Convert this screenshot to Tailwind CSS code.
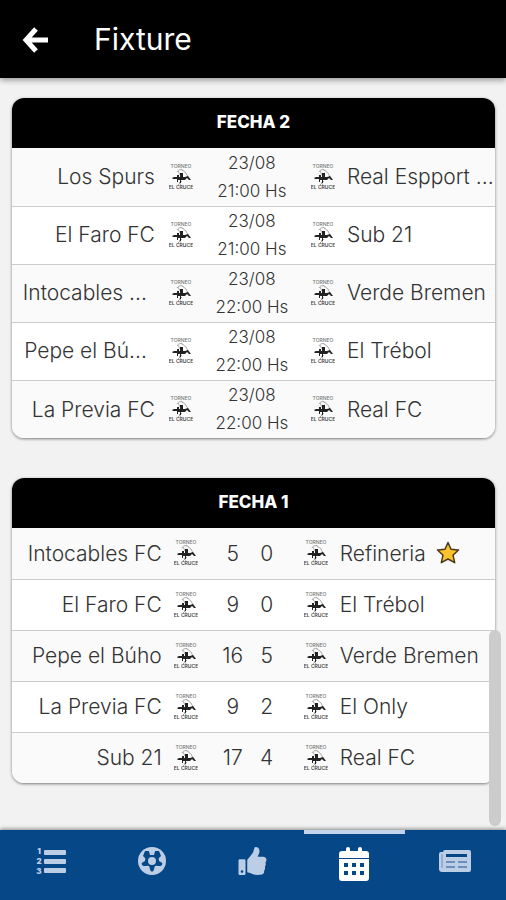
<!DOCTYPE html>
<html lang="es">

<head>
    <meta charset="UTF-8">
    <meta name="viewport" content="width=device-width, initial-scale=1.0">
    <title>Fixture</title>
    <script src="https://cdn.jsdelivr.net/npm/@tailwindcss/browser@4"></script>
</head>

<body class="bg-[#f2f2f2] h-screen flex flex-col overflow-hidden font-[Inter,sans-serif] font-light text-[#333]">
    <!-- Tournament crest, reused in every row -->
    <svg class="hidden">
        <symbol id="crest" viewBox="0 0 24 28">
            <text x="12" y="5" text-anchor="middle" font-size="5" font-weight="500" fill="#777">TORNEO</text>
            <path d="M8 9c1-3 6-3 6-1M9 8l2 4M12 6l5 4 2 4M10 19l2 3M13 18l-4 4" fill="none" stroke="#aaa" stroke-width="1" />
            <path d="M3 15l2-1h3v-2h2v2h1v-4h3v4h2l3-1 3 4-2 0-2-2-2 2h-4v3h-1v-3h-2v2H8v-3H4z" fill="#222" />
            <text x="12" y="26" text-anchor="middle" font-size="5" font-weight="600" fill="#444">EL CRUCE</text>
        </symbol>
    </svg>

    <header class="relative z-10 shrink-0 h-[78px] bg-black text-white flex items-center gap-11 pl-[22px] shadow-[0_2px_6px_rgba(0,0,0,0.4)]">
        <button type="button" aria-label="Volver">
            <svg class="w-7 h-7" viewBox="0 0 28 28" fill="none" stroke="currentColor" stroke-width="5">
                <path d="M14 4L4 15l10 11M4 15h22" />
            </svg>
        </button>
        <h1 class="text-[30px] font-normal">Fixture</h1>
    </header>

    <main class="relative flex-1 min-h-0 overflow-hidden pt-5 pl-3 pr-[11px] flex flex-col gap-10">
        <section class="shrink-0 rounded-xl overflow-hidden bg-white shadow-[0_1px_3px_rgba(0,0,0,0.5)]">
            <h2 id="fecha2" class="h-[50px] bg-black text-white text-[17px] font-extrabold flex items-center justify-center">FECHA 2</h2>
            <table aria-labelledby="fecha2" class="w-full table-fixed whitespace-nowrap text-[21px]">
                <colgroup>
                    <col class="w-[30%]">
                    <col class="w-[50px]">
                    <col class="w-[90px]">
                    <col class="w-[50px]">
                    <col>
                </colgroup>
                <tbody class="divide-y divide-[#ccc]">
                    <tr class="h-[58px] odd:bg-[#fafafa]">
                        <td class="text-right pr-0.5">Los Spurs</td>
                        <td class="pl-3"><svg class="w-6 h-7"><use href="#crest" /></svg></td>
                        <td class="text-center text-[17px] leading-7">23/08<br>21:00 Hs</td>
                        <td class="pr-3"><svg class="w-6 h-7 ml-auto"><use href="#crest" /></svg></td>
                        <td>Real Espport ...</td>
                    </tr>
                    <tr class="h-[58px] odd:bg-[#fafafa]">
                        <td class="text-right pr-0.5">El Faro FC</td>
                        <td class="pl-3"><svg class="w-6 h-7"><use href="#crest" /></svg></td>
                        <td class="text-center text-[17px] leading-7">23/08<br>21:00 Hs</td>
                        <td class="pr-3"><svg class="w-6 h-7 ml-auto"><use href="#crest" /></svg></td>
                        <td>Sub 21</td>
                    </tr>
                    <tr class="h-[58px] odd:bg-[#fafafa]">
                        <td class="text-right pr-2.5">Intocables ...</td>
                        <td class="pl-3"><svg class="w-6 h-7"><use href="#crest" /></svg></td>
                        <td class="text-center text-[17px] leading-7">23/08<br>22:00 Hs</td>
                        <td class="pr-3"><svg class="w-6 h-7 ml-auto"><use href="#crest" /></svg></td>
                        <td>Verde Bremen</td>
                    </tr>
                    <tr class="h-[58px] odd:bg-[#fafafa]">
                        <td class="text-right pr-2.5">Pepe el Bú...</td>
                        <td class="pl-3"><svg class="w-6 h-7"><use href="#crest" /></svg></td>
                        <td class="text-center text-[17px] leading-7">23/08<br>22:00 Hs</td>
                        <td class="pr-3"><svg class="w-6 h-7 ml-auto"><use href="#crest" /></svg></td>
                        <td>El Trébol</td>
                    </tr>
                    <tr class="h-[58px] odd:bg-[#fafafa]">
                        <td class="text-right pr-0.5">La Previa FC</td>
                        <td class="pl-3"><svg class="w-6 h-7"><use href="#crest" /></svg></td>
                        <td class="text-center text-[17px] leading-7">23/08<br>22:00 Hs</td>
                        <td class="pr-3"><svg class="w-6 h-7 ml-auto"><use href="#crest" /></svg></td>
                        <td>Real FC</td>
                    </tr>
                </tbody>
            </table>
        </section>

        <section class="shrink-0 rounded-xl overflow-hidden bg-white shadow-[0_1px_3px_rgba(0,0,0,0.5)]">
            <h2 id="fecha1" class="h-[50px] bg-black text-white text-[17px] font-extrabold flex items-center justify-center">FECHA 1</h2>
            <table aria-labelledby="fecha1" class="w-full table-fixed whitespace-nowrap text-[21px]">
                <colgroup>
                    <col class="w-[31%]">
                    <col class="w-[54px]">
                    <col class="w-[34px]">
                    <col class="w-[34px]">
                    <col class="w-[56px]">
                    <col>
                </colgroup>
                <tbody class="divide-y divide-[#ccc]">
                    <tr class="h-[51px] odd:bg-[#fafafa]">
                        <td class="text-right">Intocables FC</td>
                        <td class="pl-3"><svg class="w-6 h-7"><use href="#crest" /></svg></td>
                        <td class="text-center">5</td>
                        <td class="text-center">0</td>
                        <td class="pr-3"><svg class="w-6 h-7 ml-auto"><use href="#crest" /></svg></td>
                        <td>
                            <div class="flex items-center gap-2.5">Refineria
                                <svg class="w-6 h-6" viewBox="0 0 24 24" fill="#f9c22e" stroke="#4a3a1c" stroke-width="1.5" stroke-linejoin="round">
                                    <path d="M12 1.500l3 6.700 7.500.8-5.500 5.200 1.700 7.500L12 18l-6.700 3.700L7 14.200 1.500 9 9 8.200z" />
                                </svg>
                            </div>
                        </td>
                    </tr>
                    <tr class="h-[51px] odd:bg-[#fafafa]">
                        <td class="text-right">El Faro FC</td>
                        <td class="pl-3"><svg class="w-6 h-7"><use href="#crest" /></svg></td>
                        <td class="text-center">9</td>
                        <td class="text-center">0</td>
                        <td class="pr-3"><svg class="w-6 h-7 ml-auto"><use href="#crest" /></svg></td>
                        <td>El Trébol</td>
                    </tr>
                    <tr class="h-[51px] odd:bg-[#fafafa]">
                        <td class="text-right">Pepe el Búho</td>
                        <td class="pl-3"><svg class="w-6 h-7"><use href="#crest" /></svg></td>
                        <td class="text-center">16</td>
                        <td class="text-center">5</td>
                        <td class="pr-3"><svg class="w-6 h-7 ml-auto"><use href="#crest" /></svg></td>
                        <td>Verde Bremen</td>
                    </tr>
                    <tr class="h-[51px] odd:bg-[#fafafa]">
                        <td class="text-right">La Previa FC</td>
                        <td class="pl-3"><svg class="w-6 h-7"><use href="#crest" /></svg></td>
                        <td class="text-center">9</td>
                        <td class="text-center">2</td>
                        <td class="pr-3"><svg class="w-6 h-7 ml-auto"><use href="#crest" /></svg></td>
                        <td>El Only</td>
                    </tr>
                    <tr class="h-[51px] odd:bg-[#fafafa]">
                        <td class="text-right">Sub 21</td>
                        <td class="pl-3"><svg class="w-6 h-7"><use href="#crest" /></svg></td>
                        <td class="text-center">17</td>
                        <td class="text-center">4</td>
                        <td class="pr-3"><svg class="w-6 h-7 ml-auto"><use href="#crest" /></svg></td>
                        <td>Real FC</td>
                    </tr>
                </tbody>
            </table>
        </section>

        <!-- Scroll thumb -->
        <div class="absolute right-[5px] bottom-1 w-3 h-[196px] rounded-full bg-[#ccc]"></div>
    </main>

    <nav class="relative shrink-0 h-[70px] bg-[#064788] text-[#bccde6] grid grid-cols-5 shadow-[0_-1px_4px_rgba(0,0,0,0.45)]">
        <a href="#" aria-label="Posiciones" class="flex justify-center pt-[17px]">
            <svg class="w-[30px] h-7 overflow-visible" viewBox="0 0 30 28" fill="currentColor">
                <rect x="8" y="3" width="22" height="5" rx="1" />
                <rect x="8" y="12" width="22" height="5" rx="1" />
                <rect x="8" y="21" width="22" height="5" rx="1" />
                <g font-size="8" font-weight="900" text-anchor="middle">
                    <text x="3" y="7">1</text>
                    <text x="3" y="17">2</text>
                    <text x="3" y="27">3</text>
                </g>
            </svg>
        </a>
        <a href="#" aria-label="Goleadores" class="flex justify-center pt-[17px]">
            <svg class="w-7 h-7" viewBox="0 0 28 28">
                <circle cx="14" cy="14" r="14" fill="currentColor" />
                <path d="M14 7l7 5-3 8h-8l-3-8z" fill="#064788" />
                <path d="M7 4l4 0 2 4-5 4-3-3zM21 4l-4 0-2 4 5 4 3-3zM3 13l5 0 2 5-3 2-3-2zM25 13l-5 0-2 5 3 2 3-2zM11 19h6l-1 4-2 2-2-2z" fill="#064788" />
                <path d="M14 2l3 2-1 4h-4l-1-4zM2 9l5 2 0 3-5 3zM26 9l-5 2 0 3 5 3zM6 23l0-4 5 0 1 5zM22 23l0-4-5 0-1 5z" fill="currentColor" />
                <circle cx="14" cy="14" r="4" fill="currentColor" />
            </svg>
        </a>
        <a href="#" aria-label="Fair play" class="flex justify-center pt-[17px]">
            <svg class="w-[29px] h-7" viewBox="0 0 512 512" fill="currentColor">
                <path d="M104 224H24c-13.255 0-24 10.745-24 24v240c0 13.255 10.745 24 24 24h80c13.255 0 24-10.745 24-24V248c0-13.255-10.745-24-24-24zM64 472c-13.255 0-24-10.745-24-24s10.745-24 24-24 24 10.745 24 24-10.745 24-24 24zM384 81.452c0 42.416-25.970 66.208-33.277 94.548h101.723c33.397 0 59.397 27.746 59.553 58.098.084 17.938-7.546 37.249-19.439 49.197l-.11.11c9.836 23.337 8.237 56.037-9.308 79.469 8.681 25.895-.069 57.704-16.382 74.757 4.298 17.598 2.244 32.575-6.148 44.632C440.202 511.587 389.616 512 346.839 512l-2.845-.001c-48.287-.017-87.806-17.598-119.560-31.725-15.957-7.099-36.821-15.887-52.651-16.178-6.540-.12-11.783-5.457-11.783-11.998v-213.770c0-3.200 1.282-6.271 3.558-8.521 39.614-39.144 56.648-80.587 89.117-113.111 14.804-14.832 20.188-37.236 25.393-58.902C282.515 39.293 291.817 0 312 0c24 0 72 8 72 81.452z" />
            </svg>
        </a>
        <a href="#" aria-label="Fixture" aria-current="page" class="flex justify-center pt-[13px] border-t-4 border-[#c3d3ea] text-white">
            <svg class="w-[30px] h-[34px]" viewBox="0 0 30 34" fill="currentColor">
                <path d="M0 11V7q0-3 3-3h4V2q0-2 2-2t2 2v2h8V2q0-2 2-2t2 2v2h4q3 0 3 3v4z" />
                <path fill-rule="evenodd" d="M0 12h30v19q0 3-3 3H3q-3 0-3-3zM5 16v4h4v-4zM13 16v4h4v-4zM21 16v4h4v-4zM5 24v4h4v-4zM13 24v4h4v-4zM21 24v4h4v-4z" />
            </svg>
        </a>
        <a href="#" aria-label="Noticias" class="flex justify-center pt-5">
            <svg class="w-8 h-[23px]" viewBox="0 0 32 23">
                <path d="M6 0h24q2 0 2 2v18q0 2-2 2H3q-3 0-3-3V4q0-2 2-2h2q0-2 2-2z" fill="currentColor" />
                <path d="M3 4v14" stroke="#6e8fbd" stroke-width="1" />
                <path d="M7 4h21v3H7z" fill="#064788" />
                <path d="M7 11h9v2H7zM19 11h9v2h-9zM7 16h9v2H7zM19 16h9v2h-9z" fill="#6e8fbd" />
            </svg>
        </a>
    </nav>
</body>

</html>
